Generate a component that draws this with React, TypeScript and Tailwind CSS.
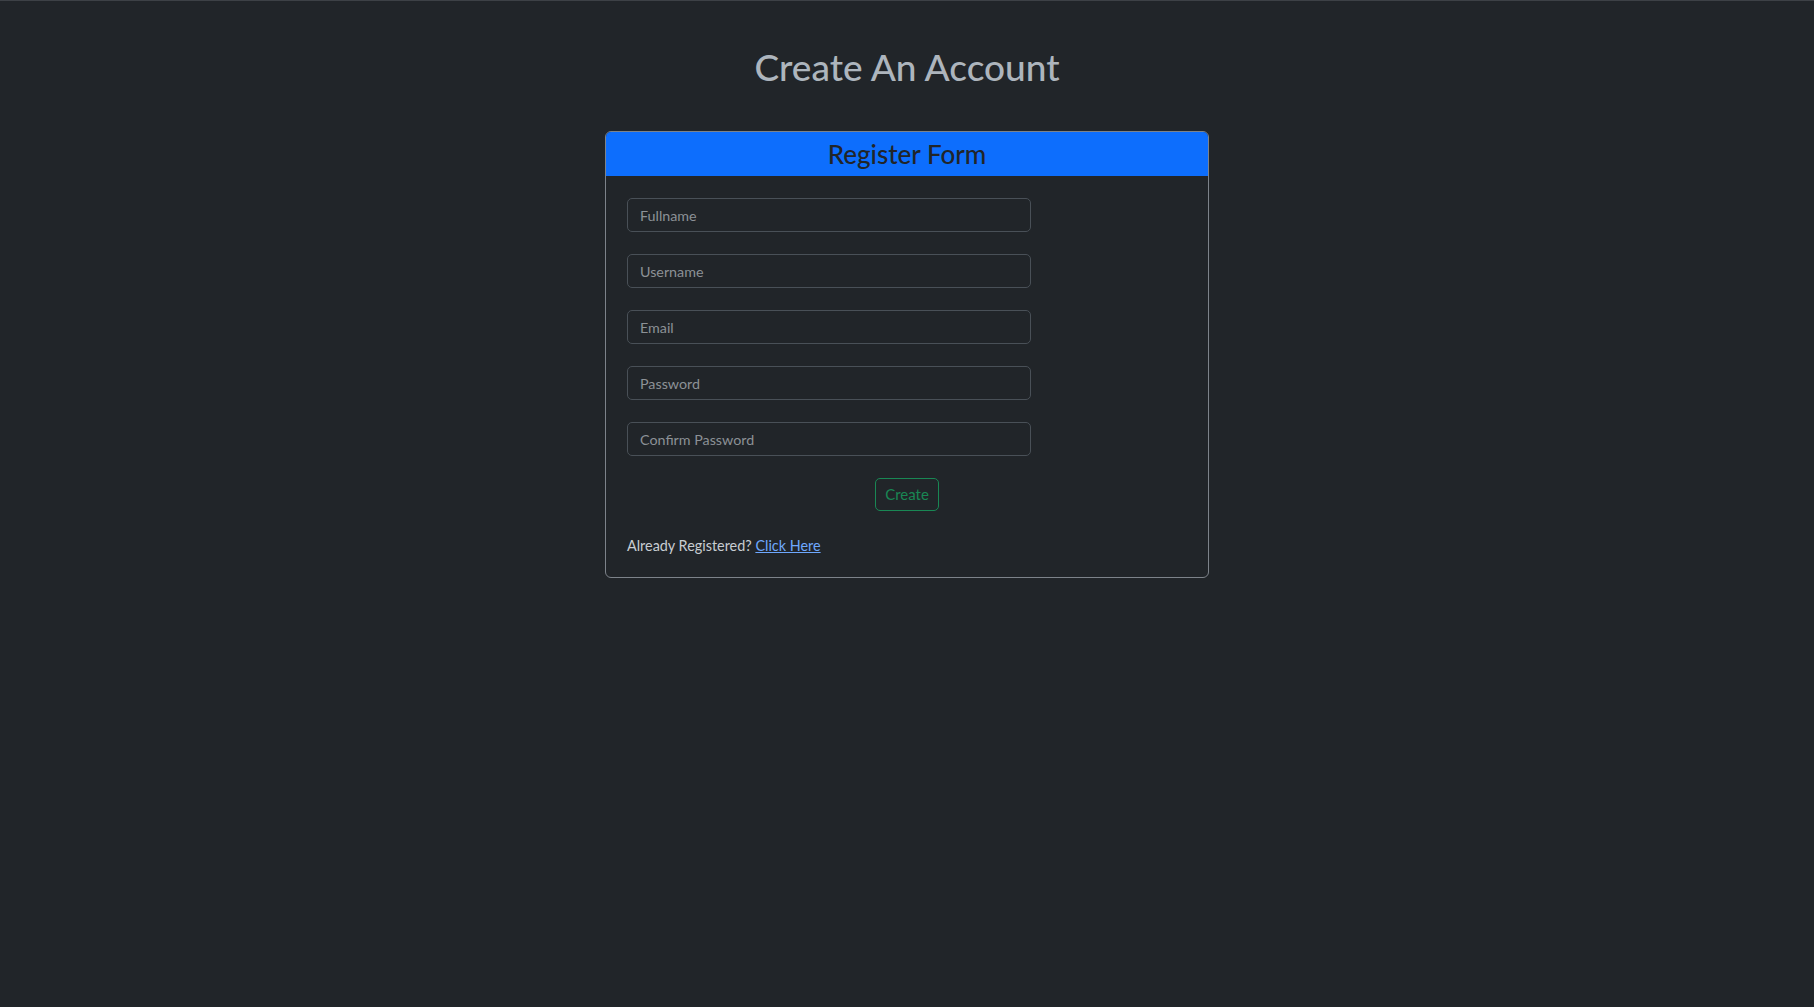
import { useState } from "react";

const fields = [
  { name: "fullname", placeholder: "Fullname", type: "text" },
  { name: "username", placeholder: "Username", type: "text" },
  { name: "email", placeholder: "Email", type: "email" },
  { name: "password", placeholder: "Password", type: "password" },
  { name: "confirm", placeholder: "Confirm Password", type: "password" },
];

export default function App() {
  const [form, setForm] = useState<Record<string, string>>({});

  return (
    <div className="min-h-screen bg-[#212529] border-t border-[#3d4146] font-['Segoe_UI','Lato',sans-serif]">
      <h1 className="pt-[41px] text-center text-[37px] leading-[50px] font-medium text-[#adb5bd]">
        Create An Account
      </h1>

      <div className="mx-auto mt-[39px] w-[604px] rounded-md border border-[#7d838a]">
        {/* Header */}
        <div className="rounded-t-[5px] bg-[#0d6efd] h-[44px] flex items-center justify-center">
          <h3 className="text-[26px] font-medium text-[#212529]">Register Form</h3>
        </div>

        {/* Body */}
        <form className="px-[21px] pt-[22px] pb-[20px]" onSubmit={(e) => e.preventDefault()}>
          <div className="flex flex-col gap-[22px] w-[404px]">
            {fields.map((f) => (
              <input
                key={f.name}
                type={f.type}
                placeholder={f.placeholder}
                value={form[f.name] || ""}
                onChange={(e) => setForm({ ...form, [f.name]: e.target.value })}
                className="h-[34px] w-full rounded-[5px] border border-[#495057] bg-[#212529] px-[12px] text-[14.3px] text-[#dee2e6] placeholder:text-[#8c9196] outline-none"
              />
            ))}
          </div>

          <div className="mt-[22px] flex justify-center">
            <button
              type="submit"
              className="h-[33px] w-[64px] rounded-[5px] border border-[#198754] text-[15px] text-[#198754]"
            >
              Create
            </button>
          </div>

          <p className="mt-[24px] text-[14.4px] text-[#c8cdd2]">
            Already Registered?{" "}
            <a href="#" className="text-[#6ea8fe] underline">
              Click Here
            </a>
          </p>
        </form>
      </div>
    </div>
  );
}
